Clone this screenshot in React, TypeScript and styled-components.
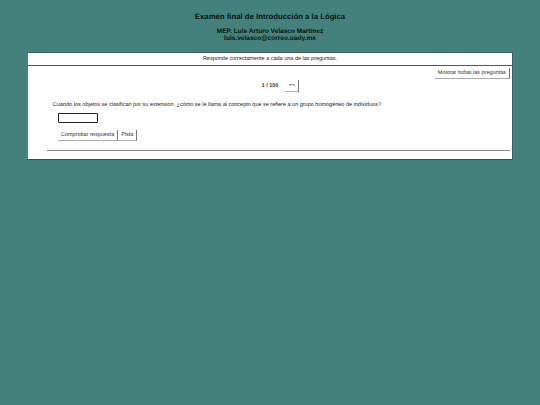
import React from "react";
import styled, { createGlobalStyle } from "styled-components";

const Global = createGlobalStyle`
  html, body { margin: 0; padding: 0; background: #45817c; }
  body { font-family: "Liberation Sans", Arial, sans-serif; color: #000; width: 540px; height: 405px; overflow: hidden; text-rendering: geometricPrecision; }
`;
const Page = styled.div`
  display: flex; flex-direction: column; padding-top: 12px;
`;
const Title = styled.h1`
  margin: 0; text-align: center; font-size: 7.75px; line-height: 10px; font-weight: 700; color: #031513;
`;
const Author = styled.h2`
  margin: 6px 0 0; text-align: center; font-size: 6.55px; line-height: 7px; font-weight: 700; color: #031513;
`;
const Panel = styled.main`
  margin: 10px 27px 0 27px; height: 108px; background: #fff; box-sizing: border-box;
  border-top: 1px solid #3b5f5c; border-left: 1px solid #55807c;
  border-right: 1px solid #3b5f5c; border-bottom: 1.5px solid #2f5350;
  display: flex; flex-direction: column;
`;
const Instructions = styled.div`
  height: 12px; text-align: center; font-size: 5.5px; line-height: 12px; color: #222;
  border-bottom: 1.5px solid #4a5a58;
`;
const Body = styled.div`
  padding: 2px 2px 0 19px; display: flex; flex-direction: column; flex: 1;
`;
const TopRow = styled.div`
  display: flex; justify-content: flex-end;
`;
const Button = styled.button`
  font-family: inherit; font-size: 5.5px; line-height: 7px; color: #333; background: #fff;
  display: inline-flex; align-items: center; justify-content: center;
  padding: 1px 3px 0; height: 11px; box-sizing: border-box; margin: 0;
  border: 0; border-right: 1px solid #777; border-bottom: 1px solid #aaa;
  white-space: nowrap; text-rendering: geometricPrecision;
`;
const Pager = styled.div`
  display: flex; justify-content: center; align-items: center; gap: 7px; padding-left: 4px; margin-top: 1px;
`;
const Count = styled.span`
  font-size: 5.5px; font-weight: 700; color: #333;
`;
const NextButton = styled(Button)`
  width: 14px; height: 12px; padding: 2px 0 0;
`;
const Question = styled.p`
  margin: 10px 0 0 6px; font-size: 5.5px; line-height: 7px; color: #222;
`;
const Answer = styled.input`
  display: block; margin: 4px 0 0 11px; width: 40px; height: 10px; box-sizing: border-box;
  border: 1px solid #222; border-radius: 1px; background: #fff; padding: 0;
`;
const Actions = styled.div`
  display: flex; margin: 7px 0 0 11px;
`;
const Rule = styled.hr`
  margin: 9px 0 0; border: 0; height: 1px; background: #8a8f8e;
`;

export default function App() {
  return (
    <Page>
      <Global />
      <Title>Examen final de Introducción a la Lógica</Title>
      <Author>MEP. Luis Arturo Velasco Martínez<br />luis.velasco@correo.uady.mx</Author>
      <Panel>
        <Instructions>Responde correctamente a cada una de las preguntas.</Instructions>
        <Body>
          <TopRow><Button>Mostrar todas las preguntas</Button></TopRow>
          <Pager><Count>1 / 100</Count><NextButton>=&gt;</NextButton></Pager>
          <Question>Cuando los objetos se clasifican por su extensión, ¿cómo se le llama al concepto que se refiere a un grupo homogéneo de individuos?</Question>
          <Answer />
          <Actions><Button>Comprobar respuesta</Button><Button>Pista</Button></Actions>
          <Rule />
        </Body>
      </Panel>
    </Page>
  );
}
